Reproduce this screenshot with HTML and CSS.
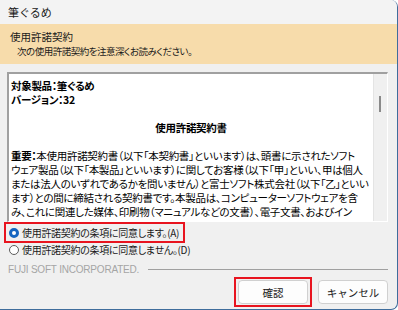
FILE: index.html
```html
<!DOCTYPE html>
<html>
<head>
<meta charset="utf-8">
<title>筆ぐるめ</title>
<link rel="stylesheet" href="styles.css">
</head>
<body>
<div class="window">
  <div class="titlebar">筆ぐるめ</div>

  <div class="header">
    <div class="header-title">使用許諾契約</div>
    <div class="header-sub">次の使用許諾契約を注意深くお読みください。</div>
  </div>

  <div class="content">
    <div class="license">
      <div class="license-text">
        <p class="bold">対象製品：筆ぐるめ</p>
        <p class="bold">バージョン：32</p>
        <p class="bold center title">使用許諾契約書</p>
        <p><b>重要：</b>本使用許諾契約書（以下「本契約書」といいます）は、頭書に示されたソフト<br>ウェア製品（以下「本製品」といいます）に関してお客様（以下「甲」といい、甲は個人<br>または法人のいずれであるかを問いません）と富士ソフト株式会社（以下「乙」といい<br>ます）との間に締結される契約書です。本製品は、コンピューターソフトウェアを含<br>み、これに関連した媒体、印刷物（マニュアルなどの文書）、電子文書、およびイン<br>ターネット上の文書を含むことがあります。</p>
      </div>
      <div class="scrollbar"><div class="thumb"></div></div>
    </div>

    <div class="options">
      <label class="option highlight">
        <input type="radio" name="agree" checked>
        <span class="radio"></span>
        使用許諾契約の条項に同意します。(A)
      </label>
      <label class="option">
        <input type="radio" name="agree">
        <span class="radio"></span>
        使用許諾契約の条項に同意しません。(D)
      </label>
    </div>

    <div class="company">
      <span>FUJI SOFT INCORPORATED.</span>
      <div class="rule"></div>
    </div>

    <div class="buttons">
      <div class="highlight btn-wrap"><button class="btn">確認</button></div>
      <button class="btn">キャンセル</button>
    </div>
  </div>
</div>
</body>
</html>
```

FILE: styles.css
```css
html, body {
  margin: 0;
  padding: 0;
  background: #ffffff;
}

body {
  font-family: "Noto Sans CJK JP", "Noto Sans", sans-serif;
  font-size: 10px;
  color: #1a1a1a;
  font-feature-settings: "palt";
}

.window {
  width: 397px;
  height: 309px;
  background: #f0f0f0;
  border-right: 1px solid #3f6d9c;
  border-bottom: 1px solid #3f6d9c;
  border-radius: 0 7px 7px 0;
  overflow: hidden;
  display: flex;
  flex-direction: column;
}

.titlebar {
  height: 24px;
  line-height: 24px;
  padding-left: 8px;
  background: #f3f3f3;
  font-size: 11px;
  font-feature-settings: normal;
}

.header {
  height: 40px;
  background: #f7dcab;
  padding: 5px 0 0 10px;
  box-sizing: border-box;
  font-size: 10.5px;
  line-height: 15px;
}

.header-sub {
  padding-left: 7px;
  font-size: 9.5px;
  letter-spacing: -0.5px;
}

.content {
  flex: 1;
  padding: 8px 9px 0 7px;
  display: flex;
  flex-direction: column;
}

.license {
  height: 150px;
  display: flex;
  border-top: 2px solid #a0a0a0;
  border-left: 2px solid #a0a0a0;
  border-right: 1px solid #ffffff;
  border-bottom: 1px solid #ffffff;
  box-sizing: border-box;
  background: #ffffff;
  overflow: hidden;
}

.license-text {
  flex: 1;
  overflow: hidden;
  padding: 5px 2px 0 2px;
  font-size: 10.5px;
  line-height: 14px;
  letter-spacing: -0.3px;
  color: #000;
}

.license-text p {
  margin: 0;
}

.bold {
  font-weight: bold;
}

.center {
  text-align: center;
}

.title {
  margin: 14px 0 14px !important;
}

.scrollbar {
  width: 13px;
  background: #f0f0f0;
  border-left: 1px solid #e4e4e4;
  position: relative;
}

.thumb {
  position: absolute;
  left: 5px;
  top: 22px;
  width: 2px;
  height: 16px;
  background: #8a8a8a;
}

.options {
  margin-top: 2px;
  display: flex;
  flex-direction: column;
}

.option {
  display: inline-flex;
  align-items: center;
  gap: 3px;
  height: 17px;
  font-size: 10px;
  letter-spacing: -0.3px;
  padding-left: 2px;
}

.option input {
  display: none;
}

.highlight {
  outline: 2px solid #e8141f;
  outline-offset: 0;
}

.options .highlight {
  align-self: flex-start;
  margin: 0 0 0 -1px;
  padding: 0 4px 0 3px;
}

.radio {
  width: 10px;
  height: 10px;
  border-radius: 50%;
  border: 1px solid #5c5c5c;
  box-sizing: border-box;
  background: #fff;
}

.option input:checked + .radio {
  border: 3px solid #1565c0;
}

.company {
  display: flex;
  align-items: center;
  gap: 9px;
  margin-top: 5px;
  height: 13px;
  color: #a5a5a5;
  font-family: "Liberation Sans", sans-serif;
  font-size: 10px;
  letter-spacing: -0.2px;
  padding-left: 1px;
}

.rule {
  flex: 1;
  height: 1px;
  background: #a0a0a0;
}

.buttons {
  display: flex;
  justify-content: flex-end;
  align-items: center;
  gap: 8px;
  margin-top: 3px;
}

.btn-wrap {
  padding: 1px 2px;
  display: flex;
}

.btn {
  width: 70px;
  height: 24px;
  background: #fdfdfd;
  border: 1px solid #d0d0d0;
  border-radius: 4px;
  font-family: "Noto Sans CJK JP", sans-serif;
  font-size: 10.5px;
  color: #1a1a1a;
  padding: 0;
}
```
